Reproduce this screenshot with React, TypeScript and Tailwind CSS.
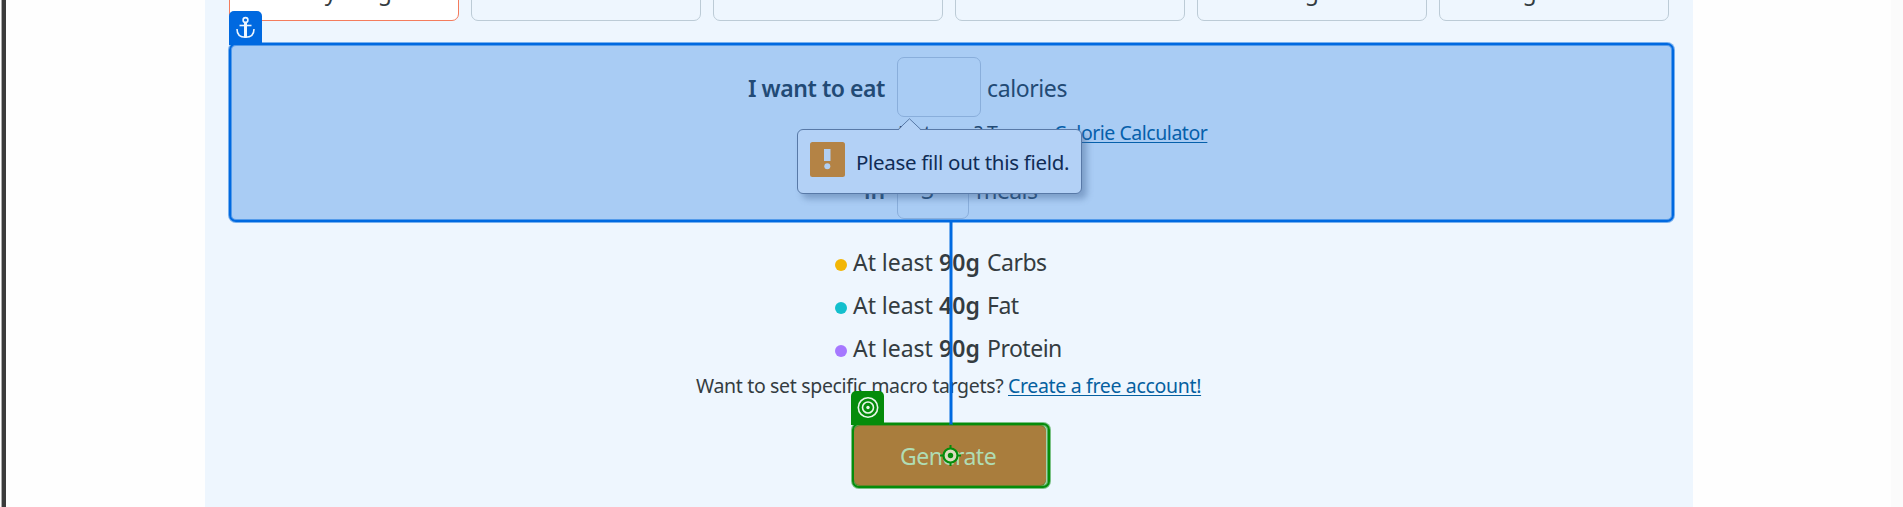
import React from 'react';

function Option({ label, active }: { label?: string; active?: boolean }) {
  return (
    <div
      className={`flex h-[61px] w-[230px] shrink-0 items-end justify-center rounded-[7px] border pb-[13px] text-[23px] leading-[32px] tracking-[-0.3px] ${active ? 'border-[#f47c5d] bg-white' : 'border-[#bccbd6]'}`}
    >
      {label}
    </div>
  );
}

function Macro({ color, amount, name }: { color: string; amount: string; name: string }) {
  return (
    <div className="flex h-[43px] items-center pb-[2px] text-[23px]">
      <span className={`mt-[5px] mr-[6px] size-[12px] rounded-full ${color}`} />
      <span className="w-[86px] tracking-[-0.05px]">At least</span>
      <span className="w-[48px] font-semibold tracking-[0.1px]">{amount}</span>
      <span className="tracking-[-0.5px]">{name}</span>
    </div>
  );
}

function AnchorTab() {
  return (
    <div className="absolute top-[-34px] left-[-2px] flex h-[34px] w-[33px] justify-center rounded-t-[5px] bg-[#0069e0] pt-[5px]">
      <svg width="22" height="24" viewBox="0 0 22 24" fill="none" stroke="#eef6fe" strokeWidth="1.6">
        <circle cx="10.500" cy="4" r="2.400" />
        <path d="M10.500 6.500v15" strokeWidth="3" />
        <path d="M4.500 9.500h12" />
        <path d="M2 13c0 5.500 3.500 8.300 8.500 8.300s8.500-2.800 8.500-8.300" />
      </svg>
    </div>
  );
}

function TargetTab() {
  return (
    <div className="absolute top-[-34px] left-[-3px] flex h-[34px] w-[33px] justify-center rounded-t-[5px] bg-[#058c0b] pt-[6px]">
      <svg width="22" height="22" viewBox="0 0 22 22" fill="none" stroke="#e9f6ea" strokeWidth="1.6">
        <circle cx="11" cy="10.500" r="9.700" />
        <circle cx="11" cy="10.500" r="5.500" />
        <circle cx="11" cy="10.500" r="1.700" fill="#e9f6ea" stroke="none" />
      </svg>
    </div>
  );
}

function ValidationTooltip() {
  return (
    <div className="absolute top-[84px] left-[566px] flex h-[65px] w-[285px] rounded-[6px] border border-[#5879a7] bg-[#b3d1f6] shadow-[5px_5px_6px_rgba(70,105,150,0.45)]">
      <svg className="absolute top-[-12px] left-[98px]" width="28" height="13" viewBox="0 0 28 13">
        <path d="M1.500 13L13.500 0.800L25.500 13" fill="#b3d1f6" />
        <path d="M0 11.500H2.200L13.500 0.800L24.800 11.500H28" fill="none" stroke="#5879a7" />
      </svg>
      <svg className="mt-[12px] ml-[12px]" width="35" height="35" viewBox="0 0 35 35">
        <rect width="35" height="35" rx="2.500" fill="#b48345" />
        <rect x="14" y="7" width="6.500" height="12" fill="#b1cff3" />
        <circle cx="17.300" cy="24.300" r="3" fill="#b1cff3" />
      </svg>
      <span className="mt-[16px] ml-[11px] text-[20.5px] leading-[32px] tracking-[-0.3px] text-[#102c55]">
        Please fill out this field.
      </span>
    </div>
  );
}

export default function App() {
  return (
    <div className="relative flex h-[507px] w-[1903px] overflow-hidden bg-[#fefefe] font-['Noto_Sans',sans-serif] whitespace-nowrap text-[#343c41]">
      <div className="ml-px h-full w-[5px] shrink-0 border-l border-[#aaa] bg-[#3b3b3b]" />
      <main className="ml-[199px] flex h-full w-[1488px] shrink-0 flex-col bg-[#eef6fe]">
        <div className="mt-[-40px] ml-[24px] flex gap-[12px]">
          <Option label="Anything" active />
          <Option />
          <Option />
          <Option />
          <Option label="Vegan" />
          <Option label="Vegetarian" />
        </div>

        <section className="relative mt-[22px] ml-[24px] h-[179px] w-[1445px] shrink-0 rounded-[7px] border-2 border-[#0069e0] bg-[#a9ccf4] text-[#224a75] shadow-[0_0_0_1px_rgba(0,105,224,0.5),inset_0_0_0_1px_rgba(0,105,224,0.5)]">
          <AnchorTab />
          <div className="mt-[12px] ml-[517px] flex h-[60px] items-center text-[23px]">
            <span className="w-[149px] pt-[2px] font-semibold tracking-[-0.45px]">I want to eat</span>
            <span className="h-[60px] w-[84px] rounded-[7px] border border-[#89aedb]" />
            <span className="ml-[6px] pt-[2px] tracking-[-0.4px]">calories</span>
          </div>
          <div className="ml-[667px] flex h-[32px] text-[19.5px] leading-[32px] tracking-[-0.47px]">
            <span className="w-[156px] tracking-[-0.33px]">Not sure? Try our</span>
            <span className="text-[#0560ab] underline underline-offset-2">Calorie Calculator</span>
          </div>
          <div className="mt-[10px] ml-[633px] flex h-[60px] items-center text-[23px]">
            <span className="w-[33px] pt-[3px] font-semibold">in</span>
            <span className="flex h-[60px] w-[72px] items-center rounded-[7px] border border-[#89aedb] pt-[3px] pl-[23px]">
              3
            </span>
            <span className="ml-[7px] pt-[3px] tracking-[-0.6px]">meals</span>
          </div>
          <ValidationTooltip />
        </section>

        <div className="mt-[20px] ml-[630px] flex flex-col">
          <Macro color="bg-[#f2b606]" amount="90g" name="Carbs" />
          <Macro color="bg-[#13bfcd]" amount="40g" name="Fat" />
          <Macro color="bg-[#a678ff]" amount="90g" name="Protein" />
        </div>

        <div className="mt-[-1px] ml-[491px] flex h-[32px] text-[19.5px] leading-[32px] tracking-[-0.33px]">
          <span className="w-[312px]">Want to set specific macro targets?</span>
          <span className="text-[#0560a0] underline underline-offset-2">Create a free account!</span>
        </div>

        <div className="relative mt-[21px] ml-[647px] h-[65px] w-[198px] shrink-0 rounded-[7px] border-2 border-[#058c0b] bg-[#a5d3ae] shadow-[0_0_0_1px_rgba(5,140,11,0.5),inset_0_0_0_1px_rgba(5,140,11,0.5)]">
          <button className="block h-[61px] w-[192px] rounded-[6px] bg-[#a97d3d] pt-[2px] pl-[46px] text-left text-[23px] tracking-[-0.5px] text-[#b0dcb4] shadow-[inset_0_1px_0_rgba(5,140,11,0.4),inset_0_-1px_0_rgba(5,140,11,0.4)]">
            Generate
          </button>
          <TargetTab />
        </div>
      </main>
      <div className="ml-auto h-full w-[12px] bg-[#fbfbfb]" />

      <div className="absolute top-[222px] left-[950px] h-[202px] w-[2px] bg-[#0069e0] shadow-[0_0_0_1px_rgba(0,105,224,0.5)]" />
      <svg className="absolute top-[444px] left-[939px]" width="23" height="23" viewBox="0 0 23 23">
        <circle cx="11.500" cy="11.500" r="7" fill="#dcdcc0" stroke="#058c0b" strokeWidth="2.200" />
        <circle cx="11.500" cy="11.500" r="2.700" fill="#058c0b" />
        <path d="M11.500 1v4M11.500 18v4M1 11.500h4M18 11.500h4" stroke="#058c0b" strokeWidth="2" />
      </svg>
    </div>
  );
}
